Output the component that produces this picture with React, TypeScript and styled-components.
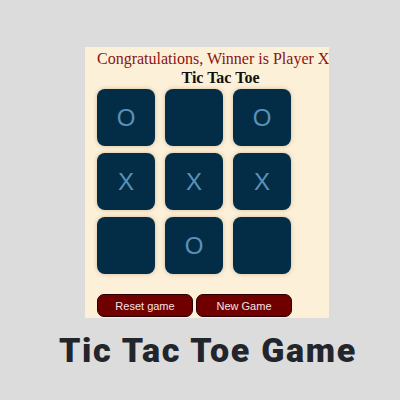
import * as React from "react";
import styled, { createGlobalStyle } from "styled-components";

const GlobalStyle = createGlobalStyle`
  html, body {
    margin: 0;
    padding: 0;
    background: #dcdcdc;
  }
`;

const Page = styled.div`
  width: 400px;
  height: 400px;
  display: flex;
  flex-direction: column;
  align-items: flex-start;
  padding-top: 47px;
  box-sizing: border-box;
`;

const Panel = styled.div`
  margin-left: 85px;
  width: 244px;
  height: 271px;
  background: #fdf0d8;
  overflow: hidden;
  box-sizing: border-box;
  padding-left: 12px;
  display: flex;
  flex-direction: column;
`;

const Winner = styled.div`
  font-family: "Liberation Serif", serif;
  font-size: 16px;
  line-height: 20px;
  color: #8a1414;
  white-space: nowrap;
  margin-top: 2px;
`;

const Heading = styled.div`
  font-family: "Liberation Serif", serif;
  font-weight: bold;
  font-size: 16px;
  line-height: 17px;
  color: #111;
  text-align: center;
  padding-left: 15px;
`;

const Board = styled.div`
  display: grid;
  grid-template-columns: repeat(3, 58px);
  grid-auto-rows: 57px;
  column-gap: 10px;
  row-gap: 7px;
  margin-top: 3px;
`;

const Cell = styled.div`
  background: #032d46;
  border-radius: 8px;
  box-shadow: 0 0 4px rgba(120, 90, 40, 0.35);
  display: flex;
  align-items: center;
  justify-content: center;
  font-family: "Liberation Sans", Arial, sans-serif;
  font-size: 24px;
  color: #5b91b8;
`;

const Buttons = styled.div`
  display: flex;
  gap: 3px;
  margin-top: 20px;
`;

const Button = styled.button`
  width: 96px;
  height: 23px;
  padding: 0;
  background: #700000;
  color: #f3e3e3;
  border: 1px solid #2a0000;
  border-radius: 7px;
  font-family: "Liberation Sans", Arial, sans-serif;
  font-size: 11px;
`;

const Caption = styled.div`
  width: 100%;
  text-align: center;
  margin-top: 12px;
  padding-left: 16px;
  box-sizing: border-box;
  font-family: Roboto, "DejaVu Sans", sans-serif;
  font-weight: 900;
  font-size: 34px;
  line-height: 40px;
  color: #22252c;
  letter-spacing: 1.7px;
`;

const board = ["O", "", "O", "X", "X", "X", "", "O", ""];

export default function App() {
  return (
    <Page>
      <GlobalStyle />
      <Panel>
        <Winner>Congratulations, Winner is Player X</Winner>
        <Heading>Tic Tac Toe</Heading>
        <Board>
          {board.map((v, i) => (
            <Cell key={i}>{v}</Cell>
          ))}
        </Board>
        <Buttons>
          <Button>Reset game</Button>
          <Button>New Game</Button>
        </Buttons>
      </Panel>
      <Caption>Tic Tac Toe Game</Caption>
    </Page>
  );
}
